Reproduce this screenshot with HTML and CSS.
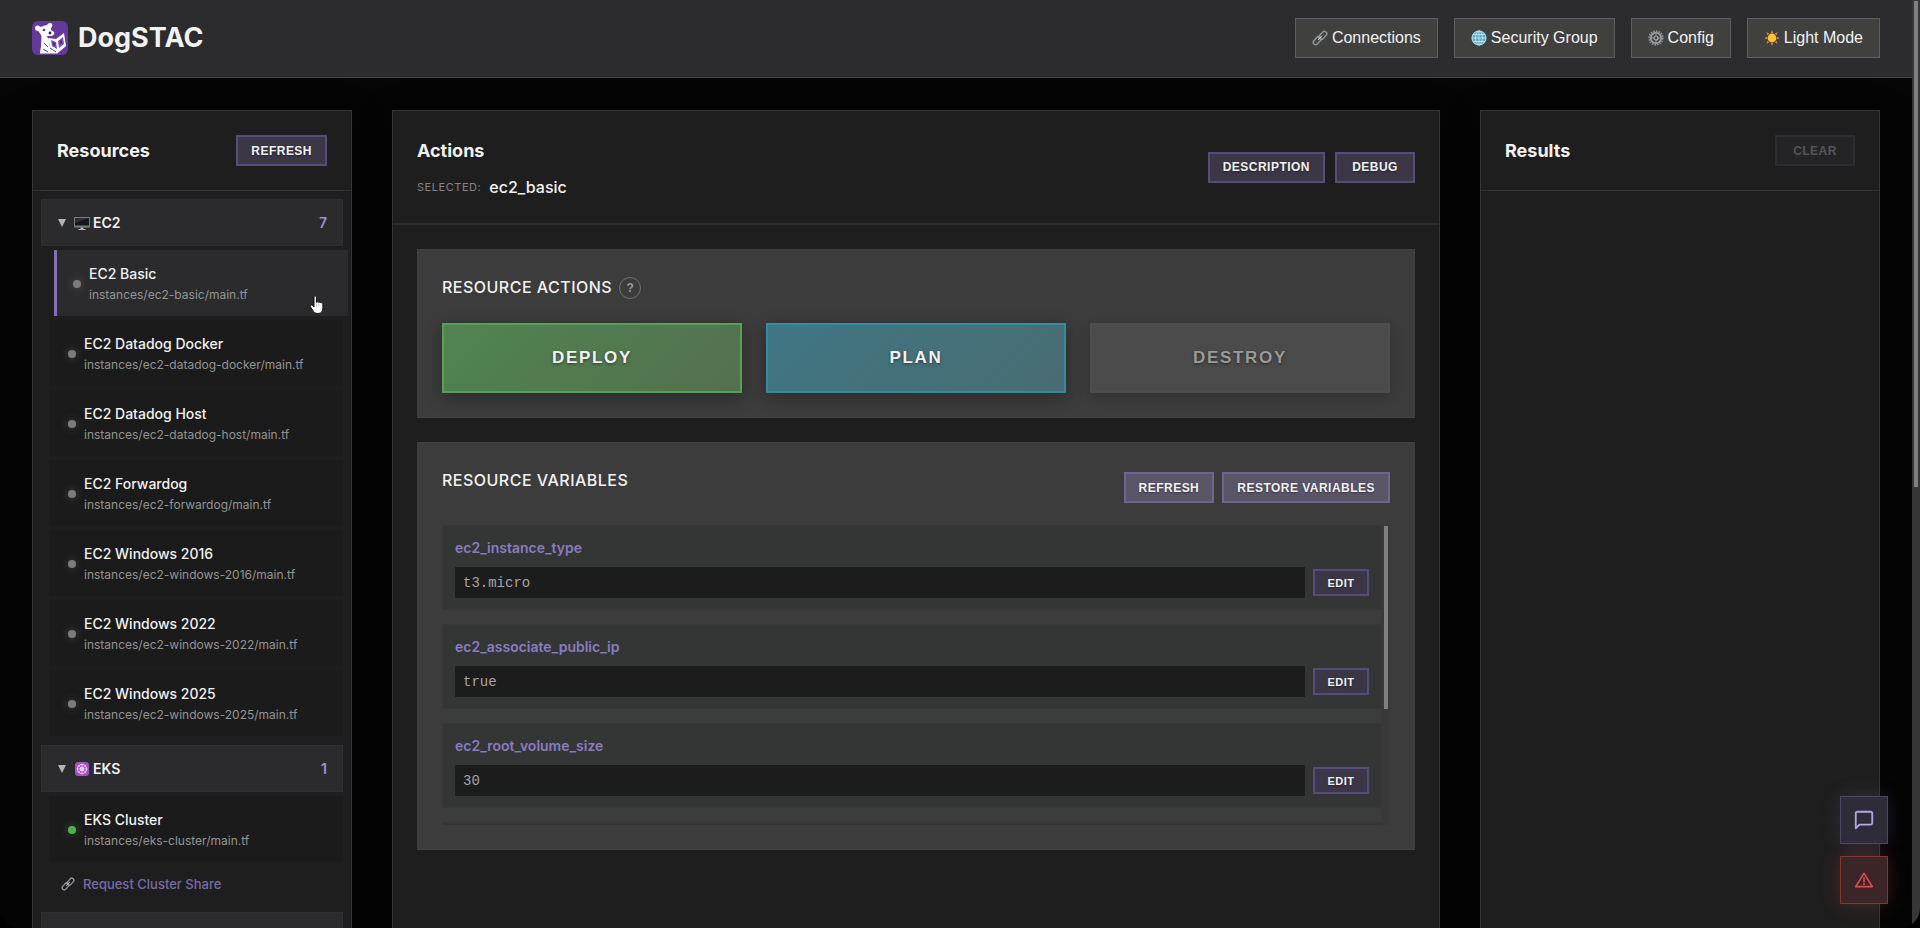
FILE: index.html
```html
<!DOCTYPE html>
<html lang="en">
<head>
    <meta charset="UTF-8">
    <title>DogSTAC</title>
    <link rel="stylesheet" href="styles.css">
</head>
<body>
    <!-- shared icons -->
    <svg class="sprite" aria-hidden="true">
        <symbol id="icon-link" viewBox="0 0 16 16">
            <g fill="none" stroke-linecap="round">
                <g stroke="#8f9699" stroke-width="1.5">
                    <rect x="6.4" y="2.9" width="9" height="4.8" rx="2.4" transform="rotate(-48 10.9 5.3)"/>
                    <rect x="0.6" y="8.3" width="9" height="4.8" rx="2.4" transform="rotate(-48 5.1 10.700)"/>
                </g>
                <path d="M6.4 9.6l3.2-3.6" stroke="#dfe4e6" stroke-width="1"/>
            </g>
        </symbol>
        <symbol id="icon-arrow" viewBox="0 0 10 10">
            <path d="M1 1h8L5 9z" fill="#b4b4b4"/>
        </symbol>
    </svg>

    <div class="app">
        <header class="header">
            <div class="brand">
                <svg class="logo" viewBox="0 0 36 34">
                    <rect width="36" height="34" rx="6" fill="#633a9c"/>
                    <!-- ears, head and muzzle -->
                    <path d="M3 7c0-2 2-3 4-2l2 1c2-1 4-2 6-2 1-2 4-3 5-1 1 1 0 3-1 4l0 2 3 2c1 2-1 4-3 4h-4c-2 1-4 0-6-1L7 11l-1-1C4 10 3 9 3 7z" fill="#fff"/>
                    <!-- body and leg -->
                    <path d="M9 13l6 2c1 2 1 4 3 6l-1 3 8 5c2 1 2 3 0 3.500H8c0-3 1-5 1-8 0-4 1-7 0-11.500z" fill="#fff"/>
                    <circle cx="12" cy="9" r="1.300" fill="#633a9c"/>
                    <circle cx="18" cy="12" r="1.400" fill="#3b2068"/>
                    <!-- open book -->
                    <path d="M16 17l8 1 8-6 2 13-7 6-9-5z" fill="#fff"/>
                    <path d="M19 19l5 2 1 7-5-3zM26 20l5-4 1 7-5 4z" fill="#7c4db3"/>
                    <path d="M21 21l2 1v3l-2-1zM28 20l2-1v3l-2 1z" fill="#4a2780"/>
                    <path d="M12 22l4 4M11 28l5 3M18 27l6 4" stroke="#633a9c" fill="none"/>
                </svg>
                <h1>DogSTAC</h1>
            </div>
            <nav class="header-buttons">
                <button class="header-btn" type="button">
                    <svg viewBox="0 0 16 16"><use href="#icon-link"/></svg>Connections
                </button>
                <button class="header-btn" type="button">
                    <svg viewBox="0 0 16 16">
                        <circle cx="8" cy="8" r="7.5" fill="#5fa9c7"/>
                        <g fill="none" stroke="#c6e6ef" stroke-width="0.8">
                            <circle cx="8" cy="8" r="7"/>
                            <ellipse cx="8" cy="8" rx="3.4" ry="7"/>
                            <path d="M8 1v14M1 8h14M2 4.500h12M2 11.500h12"/>
                        </g>
                    </svg>Security Group
                </button>
                <button class="header-btn" type="button">
                    <svg viewBox="0 0 16 16" fill="none">
                        <circle cx="8" cy="8" r="6.700" stroke="#8d9497" stroke-width="2" stroke-dasharray="1.600 1"/>
                        <circle cx="8" cy="8" r="5.200" stroke="#9aa1a4" stroke-width="1.600"/>
                        <circle cx="8" cy="8" r="2" stroke="#a9b0b3" stroke-width="1.200"/>
                        <path d="M8 3v3M8 10v3M3 8h3M10 8h3" stroke="#9aa1a4"/>
                    </svg>Config
                </button>
                <button class="header-btn" type="button">
                    <svg viewBox="0 0 16 16">
                        <path d="M8 0l1.200 3h-2.400zM8 16l1.200-3h-2.400zM0 8l3-1.200v2.400zM16 8l-3-1.200v2.400zM2.300 2.300l3 1.300-1.700 1.700zM13.700 2.300l-1.300 3-1.700-1.700zM2.300 13.700l1.300-3 1.700 1.700zM13.700 13.700l-3-1.300 1.700-1.700z" fill="#e8862a"/>
                        <circle cx="8" cy="8" r="4.400" fill="#fbc438"/>
                    </svg>Light Mode
                </button>
            </nav>
        </header>

        <main class="content">
            <section class="panel">
                <div class="panel-header">
                    <h2>Resources</h2>
                    <button class="btn" type="button">Refresh</button>
                </div>
                <div class="groups">
                    <div class="group">
                        <button class="group-header" type="button">
                            <svg class="arrow" viewBox="0 0 10 10"><use href="#icon-arrow"/></svg>
                            <svg class="group-icon" viewBox="0 0 16 16">
                                <rect x="0" y="2" width="16" height="10.500" fill="#777c7e"/>
                                <rect x="1" y="3" width="14" height="7.500" fill="#15171a"/>
                                <path d="M1 3h14L1 8z" fill="#2d3134"/>
                                <path d="M6.500 12.500h3v1.500h2v1h-7v-1h2z" fill="#b3b8ba"/>
                            </svg>
                            <span>EC2</span>
                            <span class="count">7</span>
                        </button>
                        <ul class="items">
                            <li class="item selected"><span class="dot"></span><div><a href="#ec2-basic">EC2 Basic</a><p>instances/ec2-basic/main.tf</p></div></li>
                            <li class="item"><span class="dot"></span><div><a href="#ec2-datadog-docker">EC2 Datadog Docker</a><p>instances/ec2-datadog-docker/main.tf</p></div></li>
                            <li class="item"><span class="dot"></span><div><a href="#ec2-datadog-host">EC2 Datadog Host</a><p>instances/ec2-datadog-host/main.tf</p></div></li>
                            <li class="item"><span class="dot"></span><div><a href="#ec2-forwardog">EC2 Forwardog</a><p>instances/ec2-forwardog/main.tf</p></div></li>
                            <li class="item"><span class="dot"></span><div><a href="#ec2-windows-2016">EC2 Windows 2016</a><p>instances/ec2-windows-2016/main.tf</p></div></li>
                            <li class="item"><span class="dot"></span><div><a href="#ec2-windows-2022">EC2 Windows 2022</a><p>instances/ec2-windows-2022/main.tf</p></div></li>
                            <li class="item"><span class="dot"></span><div><a href="#ec2-windows-2025">EC2 Windows 2025</a><p>instances/ec2-windows-2025/main.tf</p></div></li>
                        </ul>
                    </div>
                    <div class="group">
                        <button class="group-header" type="button">
                            <svg class="arrow" viewBox="0 0 10 10"><use href="#icon-arrow"/></svg>
                            <svg class="group-icon" viewBox="0 0 16 16">
                                <rect x="1" y="1" width="14" height="14" rx="3" fill="#a64dc9"/>
                                <g fill="none" stroke="#f0dcf7" stroke-width="1">
                                    <circle cx="8" cy="8" r="4.600"/>
                                    <circle cx="8" cy="8" r="1.800"/>
                                    <path d="M8 2.500v11M2.500 8h11M4 4l8 8M12 4l-8 8" stroke-width="0.700"/>
                                </g>
                            </svg>
                            <span>EKS</span>
                            <span class="count">1</span>
                        </button>
                        <ul class="items">
                            <li class="item"><span class="dot running"></span><div><a href="#eks-cluster">EKS Cluster</a><p>instances/eks-cluster/main.tf</p></div></li>
                        </ul>
                        <a class="share" href="#share"><svg viewBox="0 0 16 16"><use href="#icon-link"/></svg>Request Cluster Share</a>
                    </div>
                    <div class="group">
                        <button class="group-header" type="button" aria-label="Next group"></button>
                    </div>
                </div>
            </section>

            <section class="panel">
                <div class="panel-header actions-header">
                    <div>
                        <h2>Actions</h2>
                        <p class="selected-row"><span class="selected-label">Selected:</span> <span>ec2_basic</span></p>
                    </div>
                    <div class="btn-row">
                        <button class="btn" type="button">Description</button>
                        <button class="btn" type="button">Debug</button>
                    </div>
                </div>
                <div class="cards">
                    <div class="card">
                        <div class="card-title">
                            <h3>Resource Actions</h3>
                            <button class="help" type="button">?</button>
                        </div>
                        <div class="action-buttons">
                            <button class="action deploy" type="button">Deploy</button>
                            <button class="action plan" type="button">Plan</button>
                            <button class="action destroy" type="button" disabled>Destroy</button>
                        </div>
                    </div>
                    <div class="card">
                        <div class="card-header">
                            <h3>Resource Variables</h3>
                            <div class="btn-row">
                                <button class="btn light" type="button">Refresh</button>
                                <button class="btn light" type="button">Restore Variables</button>
                            </div>
                        </div>
                        <div class="variables">
                            <div class="variable-list">
                                <div class="variable">
                                    <label for="var-type">ec2_instance_type</label>
                                    <div class="variable-row">
                                        <input id="var-type" type="text" value="t3.micro" readonly>
                                        <button class="btn small" type="button">Edit</button>
                                    </div>
                                </div>
                                <div class="variable">
                                    <label for="var-ip">ec2_associate_public_ip</label>
                                    <div class="variable-row">
                                        <input id="var-ip" type="text" value="true" readonly>
                                        <button class="btn small" type="button">Edit</button>
                                    </div>
                                </div>
                                <div class="variable">
                                    <label for="var-size">ec2_root_volume_size</label>
                                    <div class="variable-row">
                                        <input id="var-size" type="text" value="30" readonly>
                                        <button class="btn small" type="button">Edit</button>
                                    </div>
                                </div>
                                <div class="variable"></div>
                            </div>
                            <div class="track"><div class="thumb"></div></div>
                        </div>
                    </div>
                </div>
            </section>

            <section class="panel">
                <div class="panel-header">
                    <h2>Results</h2>
                    <button class="btn clear" type="button" disabled>Clear</button>
                </div>
            </section>
        </main>

        <div class="page-track"><div class="page-thumb"></div></div>

        <div class="floating">
            <button class="float-btn chat" type="button" aria-label="Chat">
                <svg viewBox="0 0 24 24" fill="none" stroke="#b3a6e3" stroke-width="2" stroke-linejoin="round">
                    <path d="M21 15a2 2 0 0 1-2 2H7l-4 4V5a2 2 0 0 1 2-2h14a2 2 0 0 1 2 2z"/>
                </svg>
            </button>
            <button class="float-btn alert" type="button" aria-label="Errors">
                <svg viewBox="0 0 24 24" fill="none" stroke="#d9504e" stroke-width="2" stroke-linejoin="round">
                    <path d="M12 4L22 20H2zM12 9v6M12 16v2"/>
                </svg>
            </button>
        </div>

        <svg class="pointer" viewBox="0 0 16 20">
            <path d="M5 2c0-1.600 2.400-1.600 2.400 0v5.400c.5-.9 2-.7 2.300.2.600-.8 2-.5 2.200.4.700-.6 2-.2 2 1v4c0 3.500-1.600 5.500-5 5.500-3 0-4-1.200-5.200-3.300L1.400 11.800c-.8-1.400.8-2.400 1.900-1.300L5 12z" fill="#fff" stroke="#111" stroke-width="1"/>
            <path d="M7.600 8.500v3M9.900 9v2.500" stroke="#999" stroke-width="0.600"/>
        </svg>
    </div>
</body>
</html>
```
FILE: styles.css
```css
* {
    box-sizing: border-box;
}

body {
    margin: 0;
    background: #000;
    color: #f2f2f2;
    font-family: Inter, "Liberation Sans", sans-serif;
    font-size: 14px;
}

h1, h2, h3, p, ul {
    margin: 0;
    padding: 0;
}

button {
    font-family: "Liberation Sans", Arial, sans-serif;
    color: #f2f2f2;
    cursor: pointer;
}

a {
    color: inherit;
    text-decoration: none;
}

.sprite {
    display: none;
}

.app {
    position: relative;
    display: flex;
    flex-direction: column;
    height: 100vh;
    padding-right: 8px;
    overflow: hidden;
    background: #050505;
    border-radius: 0 0 20px 20px;
}

/* header */
.header {
    display: flex;
    flex-shrink: 0;
    align-items: center;
    justify-content: space-between;
    height: 78px;
    padding: 0 32px 1px;
    background: #2c2c2e;
    border-bottom: 1px solid #434343;
}

.brand {
    display: flex;
    align-items: center;
    gap: 10px;
}

.logo {
    width: 36px;
    height: 34px;
}

h1 {
    font-size: 27px;
    line-height: 34px;
    font-weight: 700;
}

.header-buttons {
    display: flex;
    gap: 16px;
}

.header-btn {
    display: flex;
    align-items: center;
    gap: 4px;
    height: 40px;
    padding: 0 16px;
    background: #40403f;
    border: 1px solid #5c6062;
    font-size: 16px;
}

.header-btn svg {
    width: 16px;
    height: 16px;
}

/* layout */
.content {
    display: grid;
    grid-template-columns: 320px 1fr 400px;
    gap: 40px;
    flex: 1;
    min-height: 0;
    padding: 32px 32px 0;
}

.panel {
    min-width: 0;
    background: #1e1e1e;
    border: 1px solid #353535;
    border-bottom: none;
    box-shadow: 0 8px 32px rgba(0, 0, 0, 0.4);
}

.panel-header {
    display: flex;
    align-items: center;
    justify-content: space-between;
    padding: 24px;
    border-bottom: 1px solid #333;
}

.actions-header {
    border-bottom: 2px solid #2d2d2d;
}

h2 {
    font-size: 18px;
    line-height: 31px;
    font-weight: 700;
}

/* buttons */
.btn-row {
    display: flex;
    gap: 8px;
}

.actions-header .btn-row {
    gap: 10px;
}

.btn {
    min-width: 80px;
    height: 31px;
    padding: 0 13px;
    background: #3b3747;
    border: 2px solid #574d78;
    font-size: 12px;
    font-weight: bold;
    letter-spacing: 0.04em;
    text-transform: uppercase;
    text-shadow: 0 1px 2px rgba(0, 0, 0, 0.4);
}

.btn.light {
    background: #5a5568;
    border-color: #6f6690;
}

.btn.small {
    min-width: 56px;
    height: 27px;
    padding: 0 12px;
    font-size: 11px;
}

.btn.clear {
    background: #242427;
    border-color: #2d2d31;
    color: #55555a;
    text-shadow: none;
}

/* resource groups */
.groups {
    padding: 8px;
}

.group {
    margin-bottom: 9px;
}

.group-header {
    display: flex;
    align-items: center;
    width: 100%;
    height: 47px;
    padding: 0 15px;
    background: #2b2b2d;
    border: 1px solid #303032;
    font-family: Inter, sans-serif;
    font-size: 14px;
    font-weight: 600;
}

.arrow {
    width: 10px;
    height: 10px;
    margin-right: 7px;
}

.group-icon {
    width: 16px;
    height: 16px;
    margin-right: 3px;
}

.count {
    margin-left: auto;
    color: #9e93cf;
}

.items {
    display: flex;
    flex-direction: column;
    gap: 4px;
    margin: 4px 0 0 8px;
    list-style: none;
}

.item {
    display: flex;
    align-items: center;
    gap: 8px;
    height: 66px;
    padding: 2px 16px 0;
    background: #1b1b1b;
    border-left: 3px solid transparent;
}

.item.selected {
    margin: 0 -5px 0 5px;
    background: #2b2b2d;
    border-left-color: #8072b3;
}

.item a {
    font-size: 14px;
    line-height: 22px;
    font-weight: 500;
}

.item p {
    color: #949494;
    font-size: 12px;
    line-height: 20px;
}

.dot {
    width: 8px;
    height: 8px;
    background: #7c7c7c;
    border-radius: 50%;
    box-shadow: 0 0 8px rgba(150, 150, 150, 0.4);
}

.dot.running {
    background: #4caf50;
    box-shadow: 0 0 8px rgba(76, 175, 80, 0.5);
}

.share {
    display: flex;
    align-items: center;
    gap: 8px;
    padding: 12px 20px 9px;
    color: #7a6cab;
    font-size: 13px;
    line-height: 20px;
    font-weight: 500;
}

.share svg {
    width: 14px;
    height: 14px;
}

/* actions */
.selected-row {
    display: flex;
    align-items: center;
    gap: 8px;
    margin-top: 9px;
    font-size: 16px;
    line-height: 24px;
    font-weight: 500;
}

.selected-label {
    color: #858585;
    font-size: 11px;
    font-weight: 400;
    letter-spacing: 0.05em;
    text-transform: uppercase;
}

.cards {
    display: flex;
    flex-direction: column;
    gap: 24px;
    padding: 24px;
}

.card {
    padding: 24px;
    background: #3c3c3d;
    border: 1px solid #414141;
}

h3 {
    font-size: 16px;
    line-height: 26px;
    font-weight: 500;
    letter-spacing: 0.03em;
    text-transform: uppercase;
}

.card-title {
    display: flex;
    align-items: center;
    gap: 7px;
    margin-bottom: 23px;
}

.help {
    width: 22px;
    height: 22px;
    margin-top: 2px;
    padding: 0;
    background: none;
    border: 1px solid #727272;
    border-radius: 50%;
    color: #9a9a9a;
    font-size: 12px;
    font-weight: bold;
}

.action-buttons {
    display: grid;
    grid-template-columns: repeat(3, 1fr);
    gap: 24px;
}

.action {
    height: 70px;
    border: 2px solid;
    font-size: 17px;
    font-weight: bold;
    letter-spacing: 0.1em;
    text-transform: uppercase;
    text-shadow: 0 1px 3px rgba(0, 0, 0, 0.5);
    box-shadow: 0 4px 16px rgba(0, 0, 0, 0.3);
}

.deploy {
    background: linear-gradient(135deg, #50844f, #54704f);
    border-color: #5a9d5c;
}

.plan {
    background: linear-gradient(135deg, #3f7684, #4a6c72);
    border-color: #368c9e;
}

.destroy {
    background: #4b4b4b;
    border-color: #4e4e4e;
    color: #9a9a9a;
    box-shadow: 0 4px 12px rgba(0, 0, 0, 0.2);
}

/* variables */
.card-header {
    display: flex;
    align-items: flex-start;
    justify-content: space-between;
    margin-bottom: 22px;
}

.card-header .btn-row {
    padding-top: 5px;
}

.variables {
    display: flex;
    height: 300px;
}

.variable-list {
    display: flex;
    flex: 1;
    flex-direction: column;
    gap: 14px;
    overflow: hidden;
}

.variable {
    flex-shrink: 0;
    height: 85px;
    padding: 12px;
    background: #343635;
    border: 1px solid #373938;
}

.variable label {
    display: block;
    margin-bottom: 9px;
    color: #8a7cc0;
    font-size: 14px;
    line-height: 20px;
    font-weight: 600;
}

.variable-row {
    display: flex;
    align-items: center;
    gap: 8px;
}

.variable input {
    flex: 1;
    min-width: 0;
    height: 31px;
    padding: 0 8px;
    background: #1c1c1c;
    border: none;
    outline: none;
    color: #a6a6a6;
    font-family: "Liberation Mono", "Courier New", monospace;
    font-size: 14px;
}

.track {
    width: 8px;
    padding: 1px 2px 0;
    background: #393939;
}

.thumb {
    height: 183px;
    background: #808080;
}

/* page scrollbar */
.page-track {
    position: absolute;
    top: 0;
    right: 0;
    bottom: 0;
    width: 8px;
    padding: 1px 2px;
    background: #363636;
}

.page-thumb {
    height: 486px;
    background: #808080;
}

/* floating buttons */
.floating {
    position: fixed;
    right: 32px;
    bottom: 24px;
    display: flex;
    flex-direction: column;
    gap: 12px;
}

.float-btn {
    display: flex;
    align-items: center;
    justify-content: center;
    width: 48px;
    height: 48px;
    padding: 0;
}

.float-btn svg {
    width: 22px;
    height: 22px;
}

.chat {
    background: #2e2c39;
    border: 1px solid #4d4764;
    box-shadow: 0 0 20px rgba(128, 114, 179, 0.2);
}

.alert {
    background: #3b2526;
    border: 1px solid #823535;
    box-shadow: 0 0 20px rgba(217, 80, 78, 0.25);
}

.alert svg {
    width: 20px;
    height: 20px;
}

.pointer {
    position: absolute;
    top: 295px;
    left: 309px;
    width: 16px;
    height: 20px;
}
```
